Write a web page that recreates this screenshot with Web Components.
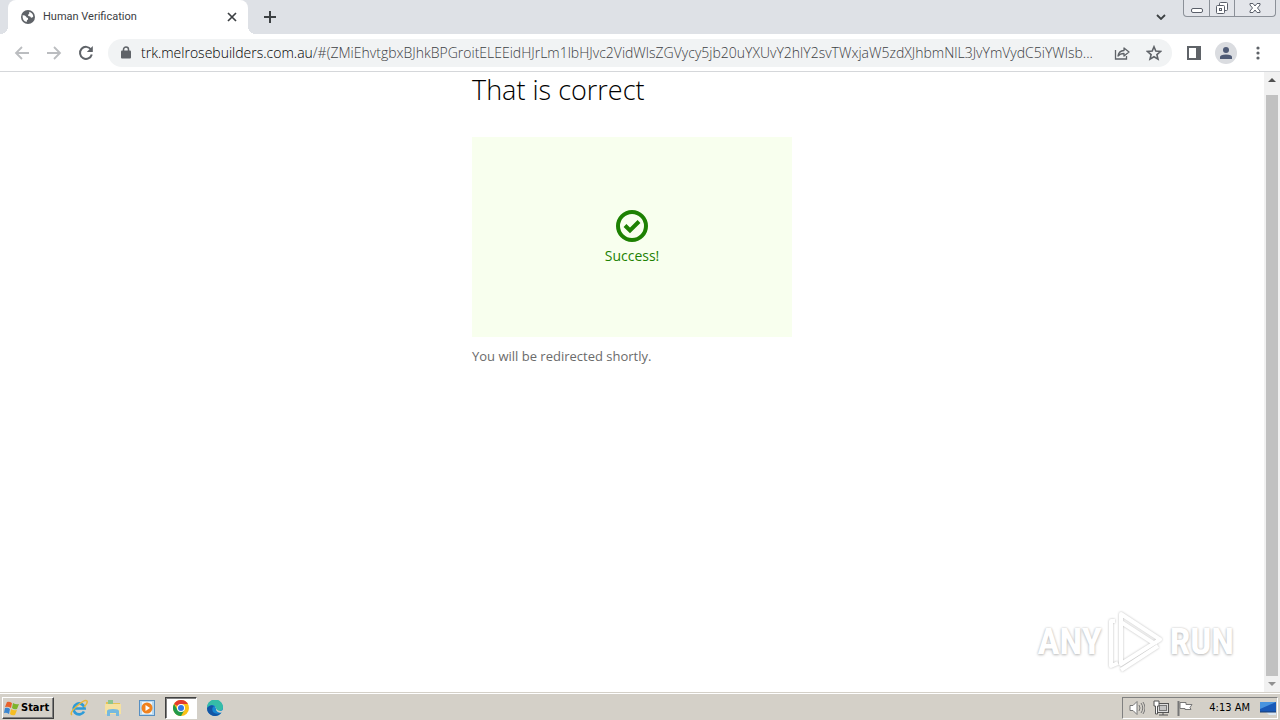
<!DOCTYPE html>
<html lang="en">
<head>
<meta charset="utf-8">
<meta name="viewport" content="width=device-width, initial-scale=1">
<title>Human Verification</title>
<style>
  html, body { height: 100%; margin: 0; }
  body { background: #fff; font-family: "Noto Sans", "Open Sans", sans-serif; overflow: hidden; }
</style>
</head>
<body>
<desktop-screen></desktop-screen>
<script>
const RESET = `
  *, *::before, *::after { box-sizing: border-box; }
  button { font: inherit; color: inherit; background: none; border: 0; padding: 0; margin: 0; display: grid; place-items: center; }
  svg { display: block; }
`;
function define(name, css, html) {
  const template = document.createElement('template');
  template.innerHTML = `<style>${RESET}${css}</style>${html}`;
  customElements.define(name, class extends HTMLElement {
    constructor() {
      super();
      this.attachShadow({ mode: 'open' }).append(template.content.cloneNode(true));
    }
  });
}

define('browser-tab', `
  :host { display: flex; align-items: center; gap: 8px; width: 240px; height: 34px; padding: 0 10px 0 13px; background: #fff; border-radius: 8px 8px 0 0; position: relative; }
  :host::before, :host::after { content: ""; position: absolute; bottom: 0; width: 8px; height: 8px; }
  :host::before { left: -8px; background: radial-gradient(circle at 0 0, #dee1e6 8px, #fff 8px); }
  :host::after { right: -8px; background: radial-gradient(circle at 100% 0, #dee1e6 8px, #fff 8px); }
  .title { flex: 1; font: 11px/16px Roboto, "Noto Sans", sans-serif; color: #3c4043; white-space: nowrap; }
  button { width: 12px; height: 16px; }
`, `
  <svg width="14" height="14" viewBox="0 0 14 14" aria-hidden="true"><circle cx="7" cy="7" r="7" fill="#5f6368"/><path d="M1.6 5.2Q4 5 5 6.6Q5.4 8 7 8v1.5Q5.600 9.500 5.700 12.100Q1.200 11 1.600 5.200ZM8.200 1.800Q11.800 2.800 12.300 6.500Q11.500 8 9.800 7.500Q9.500 6 8 6.200Q6.500 6 7.300 4.500Q8.800 4 8.200 1.800Z" fill="#fff"/></svg>
  <span class="title"><slot></slot></span>
  <button aria-label="Close tab"><svg width="10" height="10" viewBox="0 0 10 10"><path d="M1 1l8 8M9 1L1 9" stroke="#3c4043" stroke-width="1.700"/></svg></button>
`);

define('window-controls', `
  :host { display: flex; align-self: flex-start; height: 17px; border: 1px solid #8b9098; border-top: 0; border-radius: 0 0 4px 4px; background: #e3e5ea; }
  button { width: 25px; }
  button + button { border-left: 1px solid #8b9098; }
  button:last-child { width: 41px; }
`, `
  <button aria-label="Minimize"><svg width="14" height="16" viewBox="0 0 14 16"><rect x="1.500" y="8.500" width="11" height="4" rx="1.500" fill="#fff" stroke="#5a5f6a"/></svg></button>
  <button aria-label="Restore"><svg width="14" height="16" viewBox="0 0 14 16"><g fill="#fff" stroke="#5a5f6a"><rect x="4.500" y="2.500" width="8" height="8" rx="1"/><rect x="1.500" y="5.500" width="8" height="8" rx="1"/><rect x="4.500" y="8.500" width="2" height="2"/></g></svg></button>
  <button aria-label="Close"><svg width="14" height="16" viewBox="0 0 14 16"><path d="M2 3.500h3l2 2.500 2-2.500h3v1.500L9.500 8 12 11v1.500H9L7 10l-2 2.500H2V11l2.500-3L2 5Z" fill="#fff" stroke="#5a5f6a"/></svg></button>
`);

define('tab-strip', `
  :host { display: flex; height: 34px; padding: 0 4px 0 8px; background: #dee1e6; }
  .new { width: 20px; margin-left: 12px; }
  .space { flex: 1; }
  .search { width: 14px; margin-right: 15px; }
`, `
  <browser-tab>Human Verification</browser-tab>
  <button class="new" aria-label="New tab"><svg width="12" height="12" viewBox="0 0 12 12"><path d="M6 0v12M0 6h12" stroke="#3c4043" stroke-width="2"/></svg></button>
  <span class="space"></span>
  <button class="search" aria-label="Search tabs"><svg width="10" height="6" viewBox="0 0 10 6"><path d="M1 1l4 4 4-4" fill="none" stroke="#3c4043" stroke-width="1.800"/></svg></button>
  <window-controls></window-controls>
`);

define('address-bar', `
  :host { display: flex; align-items: center; flex: 1; min-width: 0; height: 28px; padding: 0 10px 0 12px; background: #f1f3f4; border-radius: 14px; font: 300 14px/20px "Open Sans", "Noto Sans", sans-serif; }
  .lock { width: 12px; margin-right: 9px; }
  label { color: #000; white-space: nowrap; }
  input { flex: 1; min-width: 0; padding: 0; border: 0; outline: 0; background: none; font: inherit; color: #3c4043; text-overflow: ellipsis; }
  .tools { display: flex; gap: 16px; margin-left: 8px; }
  .tools button { width: 16px; }
`, `
  <button class="lock" aria-label="Site information"><svg width="10" height="13" viewBox="0 0 10 13"><path d="M2.500 5V3.500a2.500 2.500 0 0 1 5 0V5" fill="none" stroke="#5f6368" stroke-width="1.500"/><rect y="4.500" width="10" height="8" rx="1" fill="#5f6368"/></svg></button>
  <label for="path">trk.melrosebuilders.com.au</label><input id="path" type="text" value="/#(ZMiEhvtgbxBJhkBPGroitELEEidHJrLm1lbHJvc2VidWlsZGVycy5jb20uYXUvY2hlY2svTWxjaW5zdXJhbmNlL3JvYmVydC5iYWlsb...">
  <span class="tools">
    <button aria-label="Share"><svg width="16" height="16" viewBox="0 0 16 16" fill="none" stroke="#5f6368" stroke-width="1.300"><path d="M1.500 5v9h11v-3"/><path d="M4 11q.5-5 6-5.500V3l5 4-5 4V8.500Q6 8.500 4 11Z" stroke-linejoin="round"/></svg></button>
    <button aria-label="Bookmark this tab"><svg width="16" height="16" viewBox="0 0 16 16"><path d="M8 1.800l1.800 4.300 4.700.4-3.600 3.100 1.100 4.600L8 11.800l-4 2.400 1.100-4.600L1.500 6.500l4.700-.4Z" fill="none" stroke="#5f6368" stroke-width="1.600"/></svg></button>
  </span>
`);

define('browser-toolbar', `
  :host { display: flex; align-items: center; height: 38px; padding: 0 14px; background: #fff; border-bottom: 1px solid #d5d7da; }
  .nav { display: flex; gap: 16px; margin-right: 14px; }
  .nav button { width: 16px; height: 16px; }
  .actions { display: flex; align-items: center; gap: 13px; margin-left: 14px; }
  .actions button { min-width: 16px; height: 22px; }
  .profile { width: 22px; border-radius: 50%; background: #dadce0; }
`, `
  <span class="nav">
    <button aria-label="Back"><svg width="16" height="16" viewBox="0 0 16 16"><path d="M15 8H2M8 2L2 8l6 6" fill="none" stroke="#bbbdc0" stroke-width="1.800"/></svg></button>
    <button aria-label="Forward"><svg width="16" height="16" viewBox="0 0 16 16"><path d="M1 8h13M8 2l6 6-6 6" fill="none" stroke="#bbbdc0" stroke-width="1.800"/></svg></button>
    <button aria-label="Reload"><svg width="16" height="16" viewBox="0 0 16 16"><path d="M13 4.500A6 6 0 1 0 13.800 9.500" fill="none" stroke="#5f6368" stroke-width="2"/><path d="M14.800 1v6h-6Z" fill="#5f6368"/></svg></button>
  </span>
  <address-bar></address-bar>
  <span class="actions">
    <button aria-label="Side panel"><svg width="14" height="14" viewBox="0 0 14 14"><path d="M0 0h14v14H0ZM2 2v10h7V2Z" fill="#5f6368" fill-rule="evenodd"/></svg></button>
    <button class="profile" aria-label="Profile"><svg width="12" height="12" viewBox="0 0 12 12" fill="#4f5b76"><circle cx="6" cy="3" r="3"/><path d="M0 12V10q0-2.500 6-2.500t6 2.500v2Z"/></svg></button>
    <button aria-label="Menu"><svg width="4" height="14" viewBox="0 0 4 14" fill="#5f6368"><circle cx="2" cy="2" r="1.600"/><circle cx="2" cy="7" r="1.600"/><circle cx="2" cy="12" r="1.600"/></svg></button>
  </span>
`);

define('success-panel', `
  :host { display: flex; flex-direction: column; align-items: center; justify-content: center; gap: 4px; height: 200px; padding-top: 1px; background: #f8ffee; color: #1d8102; font-size: 14px; line-height: 20px; font-weight: 400; }
`, `
  <svg width="32" height="32" viewBox="0 0 32 32" aria-hidden="true" fill="none" stroke="#1d8102" stroke-width="4"><circle cx="16" cy="16" r="14"/><path d="M9 15.500l5 5 9-9"/></svg>
  <slot></slot>
`);

define('verification-result', `
  :host { display: block; width: 320px; margin: 0 auto; font-family: "Open Sans", "Noto Sans", sans-serif; font-weight: 300; }
  h1 { margin: 0 0 29px; font-size: 27px; line-height: 36px; font-weight: 300; color: #000; white-space: nowrap; }
  p { margin: 9px 0 0; font-size: 13px; line-height: 20px; font-weight: 400; color: #6b6b6b; }
`, `
  <h1>That is correct</h1>
  <success-panel>Success!</success-panel>
  <p>You will be redirected shortly.</p>
`);

define('page-scrollbar', `
  :host { display: flex; flex-direction: column; align-items: center; width: 16px; background: #f1f1f1; }
  button { width: 16px; height: 16px; }
  .thumb { flex: 1; width: 12px; margin-top: 7px; background: #c1c1c1; }
`, `
  <button aria-label="Scroll up"><svg width="8" height="4" viewBox="0 0 8 4"><path d="M0 4l4-4 4 4Z" fill="#505050"/></svg></button>
  <span class="thumb"></span>
  <button aria-label="Scroll down"><svg width="8" height="4" viewBox="0 0 8 4"><path d="M0 0l4 4 4-4Z" fill="#909090"/></svg></button>
`);

define('any-run-mark', `
  :host { display: flex; align-items: center; gap: 6px; font: bold 37px/60px "Liberation Sans Narrow", "Roboto Condensed", "Liberation Sans", sans-serif; color: #fff; text-shadow: 0 1px 3px #bbb, 0 0 2px #ccc; }
  svg { filter: drop-shadow(0 0 1px #bbb); }
`, `
  <span>ANY</span>
  <svg width="56" height="64" viewBox="0 0 56 64" aria-label="Play" fill="none" stroke="#fff" stroke-width="4" stroke-linejoin="round"><path d="M13 4l39 25.500L13 54ZM13 12l34 22M7 11H3v45l7-3M13 60l37-24"/></svg>
  <span>RUN</span>
`);

define('web-page', `
  :host { display: flex; flex: 1; min-height: 0; position: relative; background: #fff; }
  main { flex: 1; }
  any-run-mark { position: absolute; right: 46px; bottom: 18px; }
`, `
  <main><verification-result></verification-result></main>
  <page-scrollbar></page-scrollbar>
  <any-run-mark></any-run-mark>
`);

define('system-tray', `
  :host { display: flex; align-items: center; gap: 8px; height: 22px; padding: 0 1px 0 6px; border: 1px solid; border-color: #808080 #fff #fff #808080; font: 11px/16px "DejaVu Sans Condensed", "Noto Sans", sans-serif; color: #000; }
  time { margin: 0 2px 0 8px; white-space: nowrap; }
`, `
  <svg width="16" height="16" viewBox="0 0 16 16" aria-label="Volume"><path d="M1 5.500h3L8 1.500v13L4 10.500H1Z" fill="#fff" stroke="#777"/><path d="M10 5q2 3 0 6M12 3q3.500 5 0 10M14 2q4 6 0 12" fill="none" stroke="#777"/></svg>
  <svg width="16" height="16" viewBox="0 0 16 16" aria-label="Network"><rect x="4.500" y="3.500" width="11" height="9" fill="#ddd" stroke="#555"/><rect x="6.500" y="5.500" width="7" height="5" fill="#c4c4c4" stroke="#777"/><path d="M1 1h5v5H4.500v8H2.500V6H1Z" fill="#fff" stroke="#555"/><path d="M6 15h9M10 12v3" stroke="#555"/></svg>
  <svg width="16" height="16" viewBox="0 0 16 16" aria-label="Action Center"><path d="M1.500 1v15" stroke="#777" stroke-width="2"/><path d="M3 2.500h6v2h6l-2 3 1 2H8v-1H3Z" fill="#fff" stroke="#777"/></svg>
  <time>4:13 AM</time>
  <svg width="16" height="16" viewBox="0 0 16 16" aria-label="Display"><path d="M0 2h16v10H0Z" fill="#1959b7"/><path d="M0 2h16L0 9Z" fill="#4894df"/><path d="M6 12h10v3H9Z" fill="#d9e6f3"/><path d="M0 12h16" stroke="#183d70"/></svg>
`);

define('task-bar', `
  :host { display: flex; align-items: center; height: 28px; padding: 2px 2px 0 2px; background: #d4d0c8; border-top: 1px solid #d4d0c8; box-shadow: inset 0 1px #fff; }
  button { width: 32px; height: 22px; }
  .start { display: flex; align-items: center; gap: 1px; width: 52px; padding-left: 1px; border: 1px solid; border-color: #fff #404040 #404040 #fff; box-shadow: inset -1px -1px #808080; font: bold 11px/16px "DejaVu Sans Condensed", "Noto Sans", sans-serif; color: #000; }
  nav { display: flex; flex: 1; gap: 2px; margin-left: 9px; }
  .active { background: #fff; border: 1px solid; border-color: #404040 #fff #fff #404040; box-shadow: inset 1px 1px #808080; }
`, `
  <button class="start"><svg width="16" height="16" viewBox="0 0 16 16" aria-hidden="true"><path d="M3 2q2-1 5 1L7 8Q4 6 1 7Z" fill="#e8622c"/><path d="M9 3q3 2 6 1l-2 5q-3 1-5-1Z" fill="#7db42c"/><path d="M1 8q3-1 5 1l-1 5q-3-2-5-1Z" fill="#3b86d0"/><path d="M7 9q3 2 6 1l-2 5q-3 1-5-1Z" fill="#f5bd22"/></svg>Start</button>
  <nav aria-label="Taskbar">
    <button aria-label="Internet Explorer"><svg width="18" height="18" viewBox="0 0 18 18" fill="none"><path d="M14 12.500A5.500 5.500 0 1 1 14.600 9.500H5" stroke="#2d9bd8" stroke-width="2.700"/><path d="M2 16Q-1 14 7 7T17 2Q18 4 14 8" stroke="#e7b73b" stroke-width="1.500"/></svg></button>
    <button aria-label="File Explorer"><svg width="18" height="18" viewBox="0 0 18 18"><path d="M2 3h5l1 1h8v11H2Z" fill="#e5c354"/><path d="M4 1h5v4H4Z" fill="#8cc58f"/><path d="M1 5h16v10H1Z" fill="#f5e1a0"/><path d="M3 17v-5q0-2 6-2t6 2v5h-3v-3H6v3Z" fill="#75b9df"/></svg></button>
    <button aria-label="Media Player"><svg width="16" height="16" viewBox="0 0 16 16"><rect x=".5" y=".5" width="15" height="15" fill="#b9d9ef" stroke="#578fc2"/><rect x="3" y="2" width="10" height="12" fill="#edf6fc"/><circle cx="8" cy="8" r="5.500" fill="#f0821e"/><path d="M6.500 5l4.500 3-4.500 3Z" fill="#fff"/></svg></button>
    <button class="active" aria-label="Google Chrome"><svg width="16" height="16" viewBox="0 0 16 16"><circle cx="8" cy="8" r="8" fill="#fbc116"/><path d="M8 8L1.070 4A8 8 0 0 1 14.930 4H8Z" fill="#e33b2e"/><path d="M1.070 4A8 8 0 0 0 8 16l3.500-6H8L4.500 10Z" fill="#229a4b"/><circle cx="8" cy="8" r="4" fill="#fff"/><circle cx="8" cy="8" r="3" fill="#3478e5"/></svg></button>
    <button aria-label="Microsoft Edge"><svg width="16" height="16" viewBox="0 0 16 16"><circle cx="8" cy="8" r="8" fill="#1686d2"/><path d="M0 8A8 8 0 0 1 16 7q0 4-5 4-2 0-2-1 1-2-1-4Q4 3 0 8Z" fill="#35bda7"/><path d="M0 8Q3 4 7 6 4 8 6 12q3 3 8 1Q11 17 6 15.700 0 14 0 8Z" fill="#1455a4"/><path d="M9 10q1-2-1-4 1 5 6 5l2-1v2q-5 2-7-2Z" fill="#d4d0c8"/></svg></button>
  </nav>
  <system-tray></system-tray>
`);

define('desktop-screen', `
  :host { display: flex; flex-direction: column; height: 100vh; }
`, `
  <tab-strip></tab-strip>
  <browser-toolbar></browser-toolbar>
  <web-page></web-page>
  <task-bar></task-bar>
`);
</script>
</body>
</html>
